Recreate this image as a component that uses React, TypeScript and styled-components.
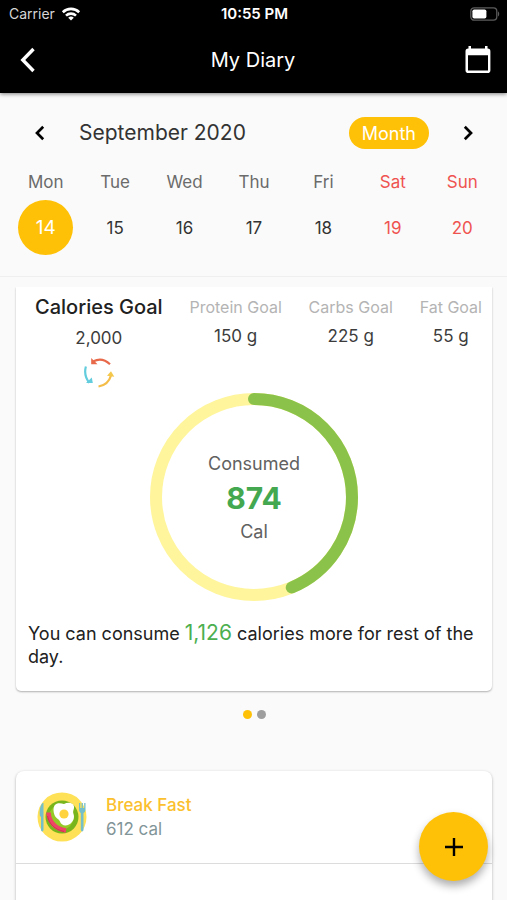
import React from "react";
import styled, { createGlobalStyle } from "styled-components";

const GlobalStyle = createGlobalStyle`
  * { box-sizing: border-box; }
  body {
    margin: 0;
    background: #fafafa;
    font-family: Inter, "Liberation Sans", sans-serif;
    color: #212121;
  }
  button { font: inherit; color: inherit; border: 0; padding: 0; background: none; cursor: pointer; }
  h1, h2, h3, p { margin: 0; font-weight: 400; }
  svg { display: block; }
`;

const Screen = styled.div`
  display: flex;
  flex-direction: column;
  height: 100vh;
  overflow: hidden;
`;

const TopBar = styled.header`
  flex: none;
  background: #000;
  color: #fff;
  box-shadow: 0 1px 4px rgba(0, 0, 0, 0.5);
`;

const StatusBar = styled.div`
  display: grid;
  grid-template-columns: 1fr auto 1fr;
  align-items: center;
  height: 27px;
  padding: 0 7px 0 9px;
  font-size: 14px;
  line-height: 27px;
`;

const Carrier = styled.span`
  display: flex;
  align-items: center;
  gap: 6px;
  color: #d6d6d6;
`;

const Clock = styled.span`
  font-size: 15px;
  font-weight: 600;
`;

const Battery = styled.span`
  justify-self: end;
`;

const NavBar = styled.div`
  display: grid;
  grid-template-columns: 1fr auto 1fr;
  align-items: center;
  height: 66px;
  padding: 0 13px 0 12px;
`;

const NavButton = styled.button<{ $end?: boolean }>`
  justify-self: ${(p) => (p.$end ? "end" : "start")};
`;

const Title = styled.h1`
  font-size: 20px;
  line-height: 28px;
`;

const Calendar = styled.section`
  flex: none;
  padding: 22px 10px 21px 11px;
  border-bottom: 1px solid #efefef;
`;

const MonthRow = styled.div`
  display: flex;
  align-items: center;
  height: 36px;
  padding: 0 15px;
`;

const Arrow = styled.button`
  display: grid;
  place-items: center;
  width: 28px;
  height: 28px;
  color: #000;
`;

const MonthName = styled.h2`
  flex: 1;
  padding-left: 25px;
  font-size: 21px;
  line-height: 28px;
  color: #333;
`;

const MonthButton = styled.button`
  height: 32px;
  margin-right: 25px;
  padding: 0 13px;
  border-radius: 16px;
  background: #ffc107;
  color: #fff;
  font-size: 18px;
`;

const Week = styled.div`
  display: grid;
  grid-template-columns: repeat(7, 1fr);
  padding-top: 19px;
`;

const Day = styled.div<{ $weekend?: boolean }>`
  display: flex;
  flex-direction: column;
  align-items: center;
  gap: 6px;
  font-size: 17px;
  line-height: 24px;
  color: ${(p) => (p.$weekend ? "#ef5350" : "#6b6b6b")};
`;

const DateButton = styled.button<{ $selected?: boolean; $weekend?: boolean }>`
  width: 55px;
  height: 55px;
  border-radius: 50%;
  background: ${(p) => (p.$selected ? "#ffc107" : "transparent")};
  color: ${(p) => (p.$selected ? "#fff" : p.$weekend ? "#ef5350" : "#333")};
  font-size: ${(p) => (p.$selected ? "19px" : "17px")};
`;

const Content = styled.main`
  flex: 1;
  min-height: 0;
  margin-top: 10px;
  padding: 0 15px 0 16px;
  overflow-y: auto;
  scrollbar-width: none;
`;

const GoalCard = styled.section`
  padding-bottom: 23px;
  border-radius: 0 0 5px 5px;
  background: #fff;
  box-shadow: 0 1px 2px rgba(0, 0, 0, 0.3);
`;

const Goals = styled.div`
  display: flex;
  justify-content: space-between;
  padding: 6px 10px 0 19px;
  height: 106px;
`;

const Goal = styled.div`
  display: flex;
  flex-direction: column;
  align-items: center;
`;

const GoalName = styled.h3<{ $main?: boolean }>`
  font-size: ${(p) => (p.$main ? "20px" : "16px")};
  font-weight: ${(p) => (p.$main ? 500 : 400)};
  line-height: 28px;
  color: ${(p) => (p.$main ? "#212121" : "#b4b4b4")};
`;

const GoalValue = styled.p<{ $main?: boolean }>`
  padding-top: ${(p) => (p.$main ? "6px" : "4px")};
  font-size: 17px;
  line-height: 22px;
  color: #3c3c3c;
`;

const RefreshButton = styled.button`
  margin-top: 8px;
`;

const Ring = styled.div`
  display: grid;
  place-items: center;
  > * { grid-area: 1 / 1; }
`;

const RingText = styled.div`
  padding-top: 2px;
  text-align: center;
  font-size: 18px;
  line-height: 28px;
  color: #616161;
`;

const Consumed = styled.p`
  font-size: 30px;
  font-weight: 700;
  line-height: 40px;
  color: #43a850;
`;

const Summary = styled.p`
  padding: 21px 12px 0;
  font-size: 18px;
  line-height: 23px;
`;

const Remaining = styled.span`
  font-size: 21px;
  line-height: 20px;
  color: #4caf50;
`;

const Dots = styled.div`
  display: flex;
  justify-content: center;
  gap: 5px;
  padding: 19px 0 52px;
`;

const Dot = styled.button<{ $active?: boolean }>`
  width: 9px;
  height: 9px;
  border-radius: 50%;
  background: ${(p) => (p.$active ? "#ffc107" : "#9e9e9e")};
`;

const MealCard = styled.section`
  min-height: 240px;
  border-radius: 8px;
  background: #fff;
  box-shadow: 0 1px 3px rgba(0, 0, 0, 0.3);
`;

const Meal = styled.div`
  display: flex;
  align-items: center;
  gap: 19px;
  height: 93px;
  padding: 0 21px;
  border-bottom: 1px solid #dcdcdc;
`;

const MealName = styled.h3`
  font-size: 17px;
  font-weight: 500;
  line-height: 24px;
  color: #fbc02d;
`;

const MealCalories = styled.p`
  font-size: 17px;
  line-height: 25px;
  color: #819598;
`;

const AddButton = styled.button`
  position: fixed;
  right: 19px;
  bottom: 19px;
  display: grid;
  place-items: center;
  width: 69px;
  height: 69px;
  border-radius: 50%;
  background: #ffc107;
  color: #000;
  box-shadow: 0 5px 9px rgba(0, 0, 0, 0.32);
`;

const days = [
  { name: "Mon", date: 14, selected: true },
  { name: "Tue", date: 15 },
  { name: "Wed", date: 16 },
  { name: "Thu", date: 17 },
  { name: "Fri", date: 18 },
  { name: "Sat", date: 19, weekend: true },
  { name: "Sun", date: 20, weekend: true },
];

const goals = [
  { name: "Protein Goal", value: "150 g" },
  { name: "Carbs Goal", value: "225 g" },
  { name: "Fat Goal", value: "55 g" },
];

const WifiIcon = () => (
  <svg width="20" height="14" viewBox="0 0 20 14" fill="none" stroke="#fff" strokeWidth="2.6">
    <path d="M1.8 5.2a11.8 11.8 0 0 1 16.4 0" />
    <path d="M5 8.6a7.2 7.2 0 0 1 10 0" />
    <path d="M10 13.6 7.2 10.8a4 4 0 0 1 5.6 0Z" fill="#fff" stroke="none" />
  </svg>
);

const BatteryIcon = () => (
  <svg width="30" height="14" viewBox="0 0 30 14">
    <rect x="0.8" y="0.8" width="26" height="12.4" rx="3.4" fill="none" stroke="#5c5c5c" strokeWidth="1.3" />
    <rect x="2.4" y="2.4" width="14" height="9.2" rx="1.8" fill="#fff" />
    <path d="M28 4.6c1.6.5 1.6 4.3 0 4.8Z" fill="#5c5c5c" />
  </svg>
);

const BackIcon = () => (
  <svg width="32" height="32" viewBox="0 0 32 32" fill="none" stroke="#fff" strokeWidth="3.4">
    <path d="M21.500 5 10.800 16l10.700 11" />
  </svg>
);

const CalendarIcon = () => (
  <svg width="32" height="32" viewBox="0 0 32 32" fill="#fff" fillRule="evenodd">
    <path d="M6.500 2h2.500v2.600h14V2h2.500v2.600h.2a2.800 2.800 0 0 1 2.700 2.800v18.800a2.800 2.800 0 0 1-2.800 2.800H6.300a2.800 2.800 0 0 1-2.800-2.800V7.400a2.800 2.800 0 0 1 2.800-2.800h.2ZM6 11.200v15.300h20V11.200Z" />
  </svg>
);

const Chevron = ({ right }: { right?: boolean }) => (
  <svg width="16" height="16" viewBox="0 0 16 16" fill="none" stroke="currentColor" strokeWidth="2.700">
    <path d={right ? "m4.800 1.800 6.200 6.200-6.200 6.200" : "m11.200 1.800-6.200 6.200 6.200 6.200"} />
  </svg>
);

const CycleIcon = () => (
  <svg width="32" height="32" viewBox="0 0 32 32" fill="none" strokeWidth="2.200">
    <path d="M10.500 4.300Q19-.2 27 7.200" stroke="#e8694a" />
    <path d="M8.200 1v6.300h6.300Z" fill="#e8694a" />
    <path d="M2.900 9.500Q.4 18 6.200 25.800" stroke="#63cddd" />
    <path d="M3 26h6.800l-1-5.600Z" fill="#63cddd" />
    <path d="M15.500 29.500Q25.300 28 28 18.500" stroke="#f4bd4a" />
    <path d="M28 14.200l-4 4.600 7.300 1Z" fill="#f4c84a" />
  </svg>
);

const RingChart = ({ share }: { share: number }) => (
  <svg width="208" height="208" viewBox="0 0 208 208" fill="none" strokeWidth="12">
    <circle cx="104" cy="104" r="98" stroke="#fff59d" />
    <circle
      cx="104"
      cy="104"
      r="98"
      stroke="#8bc34a"
      strokeLinecap="round"
      pathLength="100"
      strokeDasharray={`${share * 100} 100`}
      transform="rotate(-90 104 104)"
    />
  </svg>
);

const BreakfastIcon = () => (
  <svg width="50" height="50" viewBox="0 0 50 50">
    <circle cx="25" cy="25" r="24.500" fill="#ffe158" />
    <circle cx="25" cy="25" r="16.500" fill="#78b51c" />
    <circle cx="24" cy="25.500" r="12.500" fill="#94c926" />
    <path d="M17.500 13.500c2-3 6.500-2.500 9.500-1.500 4-2 9.500-1.500 10 2.500.3 3-1.500 4-.5 7.500 1.500 4-.5 8.500-4.500 10.500-4 2-8 .5-9-3-.8-2.500-4-3-5.500-6.500-1.200-3.500-1.500-7 0-9.500Z" fill="#fff" />
    <circle cx="27" cy="22" r="4.600" fill="#ffd33d" />
    <path d="M11.500 20.500c.5 9.500 7 16.500 17.500 18" fill="none" stroke="#ee4466" strokeWidth="4.600" />
    <path d="M10.500 24c1.500 8 7 13.500 16.500 15.500" fill="none" stroke="#d03450" strokeWidth="1" />
    <path d="M5.500 11C2.500 14 2.500 20 3 24.500h1v13c0 2.500 2.500 2.500 2.500 0V11Z" fill="#74bfc9" />
    <path d="M42 11v6.500c0 2 1 3 1.800 3.500v16.500c0 2.500 2.700 2.500 2.700 0V21c1-.5 2-1.500 2-3.500V11h-1.300v5h-1.300v-5h-1.300v5h-1.300v-5Z" fill="#74bfc9" />
  </svg>
);

const PlusIcon = () => (
  <svg width="18" height="18" viewBox="0 0 18 18" stroke="currentColor" strokeWidth="2.400">
    <path d="M9 0v18M0 9h18" />
  </svg>
);

export default function App() {
  return (
    <Screen>
      <GlobalStyle />
      <TopBar>
        <StatusBar>
          <Carrier>Carrier <WifiIcon /></Carrier>
          <Clock>10:55 PM</Clock>
          <Battery><BatteryIcon /></Battery>
        </StatusBar>
        <NavBar>
          <NavButton aria-label="Back"><BackIcon /></NavButton>
          <Title>My Diary</Title>
          <NavButton $end aria-label="Open calendar"><CalendarIcon /></NavButton>
        </NavBar>
      </TopBar>

      <Calendar>
        <MonthRow>
          <Arrow aria-label="Previous week"><Chevron /></Arrow>
          <MonthName>September 2020</MonthName>
          <MonthButton>Month</MonthButton>
          <Arrow aria-label="Next week"><Chevron right /></Arrow>
        </MonthRow>
        <Week>
          {days.map((d) => (
            <Day key={d.date} $weekend={d.weekend}>
              {d.name}
              <DateButton $selected={d.selected} $weekend={d.weekend}>{d.date}</DateButton>
            </Day>
          ))}
        </Week>
      </Calendar>

      <Content>
        <GoalCard>
          <Goals>
            <Goal>
              <GoalName $main>Calories Goal</GoalName>
              <GoalValue $main>2,000</GoalValue>
              <RefreshButton aria-label="Change goal"><CycleIcon /></RefreshButton>
            </Goal>
            {goals.map((g) => (
              <Goal key={g.name}>
                <GoalName>{g.name}</GoalName>
                <GoalValue>{g.value}</GoalValue>
              </Goal>
            ))}
          </Goals>
          <Ring>
            <RingChart share={874 / 2000} />
            <RingText>
              <p>Consumed</p>
              <Consumed>874</Consumed>
              <p>Cal</p>
            </RingText>
          </Ring>
          <Summary>
            You can consume <Remaining>1,126</Remaining> calories more for rest of the day.
          </Summary>
        </GoalCard>
        <Dots>
          <Dot $active aria-label="First page" />
          <Dot aria-label="Second page" />
        </Dots>
        <MealCard>
          <Meal>
            <BreakfastIcon />
            <div>
              <MealName>Break Fast</MealName>
              <MealCalories>612 cal</MealCalories>
            </div>
          </Meal>
        </MealCard>
      </Content>

      <AddButton aria-label="Add meal"><PlusIcon /></AddButton>
    </Screen>
  );
}
